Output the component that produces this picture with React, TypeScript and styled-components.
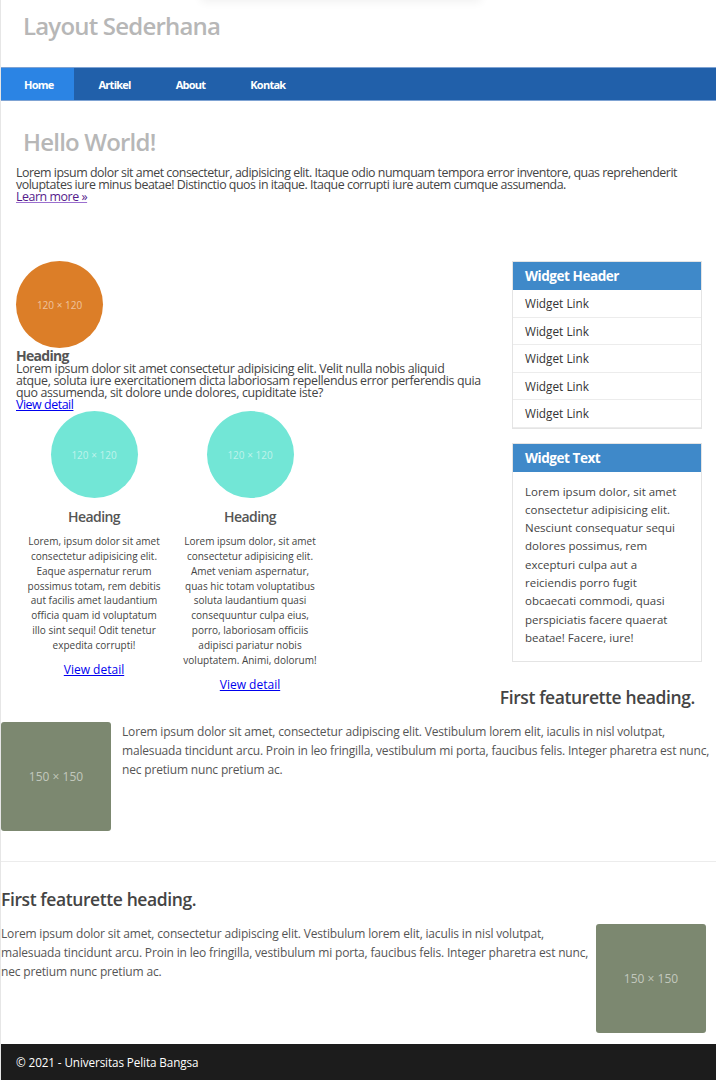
import React from "react";
import styled, { createGlobalStyle } from "styled-components";

const Global = createGlobalStyle`
  html, body { margin: 0; padding: 0; background: #ffffff; }
  body { font-family: "Open Sans", "Noto Sans", sans-serif; color: #444; }
  * { box-sizing: border-box; }
`;

const Page = styled.div`
  position: relative;
  width: 716px;
  border-left: 1px solid #e6e6e6;
  overflow: hidden;
`;

const TopShadow = styled.div`
  position: absolute;
  top: -30px;
  left: 200px;
  width: 280px;
  height: 30px;
  box-shadow: 0 2px 10px rgba(0, 0, 0, 0.06);
`;

const Header = styled.header`
  height: 67px;
  padding: 10px 0 0 22px;
`;

const SiteTitle = styled.h1`
  margin: 0;
  font-size: 24px;
  font-weight: 600;
  line-height: 32px;
  color: #b7b7b7;
  letter-spacing: -0.8px;
`;

const Nav = styled.nav`
  display: flex;
  height: 34px;
  background: #2160aa;
  border-top: 1px solid #7fa3d3;
  border-bottom: 1px solid #7fa3d3;
`;

const NavItem = styled.a<{ $active?: boolean }>`
  display: flex;
  align-items: center;
  padding: 0 20px 0 25px;
  font-size: 11px;
  font-weight: 700;
  letter-spacing: -0.75px;
  color: #ffffff;
  text-decoration: none;
  background: ${(p) => (p.$active ? "#2b84e4" : "transparent")};
  &:first-child { padding: 0 20px 0 23px; }
`;

const Hero = styled.section`
  padding: 25px 0 0 15px;
  height: 160px;
`;

const HeroTitle = styled.h2`
  margin: 0 0 9px 7px;
  font-size: 24px;
  font-weight: 600;
  line-height: 32px;
  color: #b7b7b7;
  letter-spacing: -0.8px;
`;

const TightText = styled.p<{ $spacing?: number }>`
  margin: 0;
  font-size: 12.4px;
  line-height: 12px;
  letter-spacing: ${(p) => p.$spacing ?? -0.4}px;
  color: #444;
`;

const VisitedLink = styled.a`
  display: block;
  width: fit-content;
  font-size: 12.4px;
  line-height: 12px;
  letter-spacing: -0.45px;
  color: #551a8b;
  text-decoration: underline;
  text-decoration-color: #9b6fcf;
`;

const BlueLink = styled.a<{ $size?: number; $spacing?: number }>`
  display: block;
  font-size: ${(p) => p.$size ?? 12.4}px;
  line-height: 12px;
  letter-spacing: ${(p) => p.$spacing ?? 0}px;
  color: #0000ee;
  text-decoration: underline;
`;

const Main = styled.div`
  display: flex;
  gap: 22px;
  padding: 0 14px 0 15px;
`;

const Content = styled.div`
  flex: 1;
`;

const Feature = styled.div`
  display: flex;
  flex-direction: column;
  align-items: flex-start;
  max-width: 470px;
`;

const Circle = styled.div<{ $color: string }>`
  width: 87px;
  height: 87px;
  border-radius: 50%;
  background: ${(p) => p.$color};
  display: flex;
  align-items: center;
  justify-content: center;
  font-size: 10px;
  color: rgba(255, 255, 255, 0.55);
  flex-shrink: 0;
`;

const FeatureHeading = styled.h3`
  margin: 0;
  font-size: 14px;
  font-weight: 700;
  line-height: 15px;
  letter-spacing: -0.7px;
  color: #555;
`;

const Columns = styled.div`
  display: grid;
  grid-template-columns: 156px 156px;
`;

const Col = styled.div`
  display: flex;
  flex-direction: column;
  align-items: center;
  text-align: center;
  padding: 0 8px;
`;

const ColHeading = styled.h3`
  margin: 9px 0 8px;
  font-size: 14px;
  font-weight: 600;
  line-height: 19px;
  letter-spacing: -0.55px;
  color: #555;
`;

const ColText = styled.p`
  margin: 0 0 11px;
  font-size: 10px;
  line-height: 14.85px;
  color: #444;
`;

const Sidebar = styled.aside`
  width: 190px;
  display: flex;
  flex-direction: column;
  gap: 14px;
`;

const Widget = styled.div`
  border: 1px solid #e4e4e4;
  background: #fff;
`;

const WidgetHeader = styled.div`
  height: 28px;
  display: flex;
  align-items: center;
  padding-left: 12px;
  background: #3f89c9;
  color: #fff;
  font-size: 13.5px;
  font-weight: 700;
  letter-spacing: -0.45px;
`;

const WidgetLink = styled.a`
  display: flex;
  align-items: center;
  height: 27.5px;
  padding-left: 12px;
  border-bottom: 1px solid #ececec;
  font-size: 11.8px;
  color: #333;
  text-decoration: none;
`;

const WidgetBody = styled.p`
  margin: 0;
  padding: 11px 12px 14px;
  font-size: 11.5px;
  line-height: 18.3px;
  color: #444;
`;

const FeaturetteHeading = styled.h2<{ $right?: boolean }>`
  margin: 0 0 14px;
  font-size: 17.5px;
  font-weight: 600;
  line-height: 22px;
  color: #444;
  letter-spacing: -0.4px;
  text-align: ${(p) => (p.$right ? "right" : "left")};
  padding-right: ${(p) => (p.$right ? "21px" : "0")};
`;

const FeaturetteRow = styled.div<{ $reverse?: boolean }>`
  display: flex;
  flex-direction: ${(p) => (p.$reverse ? "row-reverse" : "row")};
  align-items: flex-start;
  gap: ${(p) => (p.$reverse ? "3px" : "11px")};
`;

const PlaceholderBox = styled.div`
  width: 110px;
  height: 109px;
  flex-shrink: 0;
  border-radius: 3px;
  background: #7c8870;
  display: flex;
  align-items: center;
  justify-content: center;
  font-size: 12px;
  color: rgba(255, 255, 255, 0.55);
`;

const FeaturetteText = styled.p`
  margin: 0;
  flex: 1;
  font-size: 12px;
  line-height: 19px;
  color: #555;
  letter-spacing: -0.17px;
`;

const Featurette1 = styled.section`
  margin-top: -5px;
  padding-bottom: 30px;
`;

const Featurette2 = styled.section`
  padding: 26px 10px 11px 0;
`;

const Divider = styled.hr`
  margin: 0;
  border: 0;
  border-top: 1px solid #ececec;
`;

const Footer = styled.footer`
  height: 36px;
  margin-left: -1px;
  background: #1c1c1c;
  display: flex;
  align-items: center;
  padding-left: 16px;
  color: #fff;
  font-size: 11.7px;
  letter-spacing: -0.1px;
`;

const links = ["Widget Link", "Widget Link", "Widget Link", "Widget Link", "Widget Link"];

const featText =
  "Lorem ipsum dolor sit amet, consectetur adipiscing elit. Vestibulum lorem elit, iaculis in nisl volutpat, malesuada tincidunt arcu. Proin in leo fringilla, vestibulum mi porta, faucibus felis. Integer pharetra est nunc, nec pretium nunc pretium ac.";

export default function App() {
  return (
    <>
      <Global />
      <Page>
        <TopShadow />
        <Header>
          <SiteTitle>Layout Sederhana</SiteTitle>
        </Header>
        <Nav>
          <NavItem $active href="#">Home</NavItem>
          <NavItem href="#">Artikel</NavItem>
          <NavItem href="#">About</NavItem>
          <NavItem href="#">Kontak</NavItem>
        </Nav>
        <Hero>
          <HeroTitle>Hello World!</HeroTitle>
          <TightText $spacing={-0.47}>
            Lorem ipsum dolor sit amet consectetur, adipisicing elit. Itaque odio numquam tempora error inventore, quas
            reprehenderit voluptates iure minus beatae! Distinctio quos in itaque. Itaque corrupti iure autem cumque
            assumenda.
          </TightText>
          <VisitedLink href="#">Learn more »</VisitedLink>
        </Hero>
        <Main>
          <Content>
            <Feature>
              <Circle $color="#dc7e28">120 × 120</Circle>
              <FeatureHeading>Heading</FeatureHeading>
              <TightText $spacing={-0.34}>
                Lorem ipsum dolor sit amet consectetur adipisicing elit. Velit nulla nobis aliquid
                <br />
                atque, soluta iure exercitationem dicta laboriosam repellendus error perferendis quia quo assumenda,
                sit dolore unde dolores, cupiditate iste?
              </TightText>
              <BlueLink href="#" $spacing={-0.45}>View detail</BlueLink>
            </Feature>
            <Columns>
              <Col>
                <Circle $color="#72e6d6">120 × 120</Circle>
                <ColHeading>Heading</ColHeading>
                <ColText>
                  Lorem, ipsum dolor sit amet consectetur adipisicing elit. Eaque aspernatur rerum possimus totam, rem
                  debitis aut facilis amet laudantium officia quam id voluptatum illo sint sequi! Odit tenetur expedita
                  corrupti!
                </ColText>
                <BlueLink href="#" $size={12}>View detail</BlueLink>
              </Col>
              <Col>
                <Circle $color="#72e6d6">120 × 120</Circle>
                <ColHeading>Heading</ColHeading>
                <ColText>
                  Lorem ipsum dolor, sit amet consectetur adipisicing elit. Amet veniam aspernatur, quas hic totam
                  voluptatibus soluta laudantium quasi consequuntur culpa eius, porro, laboriosam officiis adipisci
                  pariatur nobis voluptatem. Animi, dolorum!
                </ColText>
                <BlueLink href="#" $size={12}>View detail</BlueLink>
              </Col>
            </Columns>
          </Content>
          <Sidebar>
            <Widget>
              <WidgetHeader>Widget Header</WidgetHeader>
              {links.map((l, i) => (
                <WidgetLink key={i} href="#">{l}</WidgetLink>
              ))}
            </Widget>
            <Widget>
              <WidgetHeader>Widget Text</WidgetHeader>
              <WidgetBody>
                Lorem ipsum dolor, sit amet consectetur adipisicing elit. Nesciunt consequatur sequi dolores possimus,
                rem excepturi culpa aut a reiciendis porro fugit obcaecati commodi, quasi perspiciatis facere quaerat
                beatae! Facere, iure!
              </WidgetBody>
            </Widget>
          </Sidebar>
        </Main>
        <Featurette1>
          <FeaturetteHeading $right>First featurette heading.</FeaturetteHeading>
          <FeaturetteRow>
            <PlaceholderBox>150 × 150</PlaceholderBox>
            <FeaturetteText>{featText}</FeaturetteText>
          </FeaturetteRow>
        </Featurette1>
        <Divider />
        <Featurette2>
          <FeaturetteHeading>First featurette heading.</FeaturetteHeading>
          <FeaturetteRow $reverse>
            <PlaceholderBox>150 × 150</PlaceholderBox>
            <FeaturetteText>{featText}</FeaturetteText>
          </FeaturetteRow>
        </Featurette2>
        <Footer>© 2021 - Universitas Pelita Bangsa</Footer>
      </Page>
    </>
  );
}
